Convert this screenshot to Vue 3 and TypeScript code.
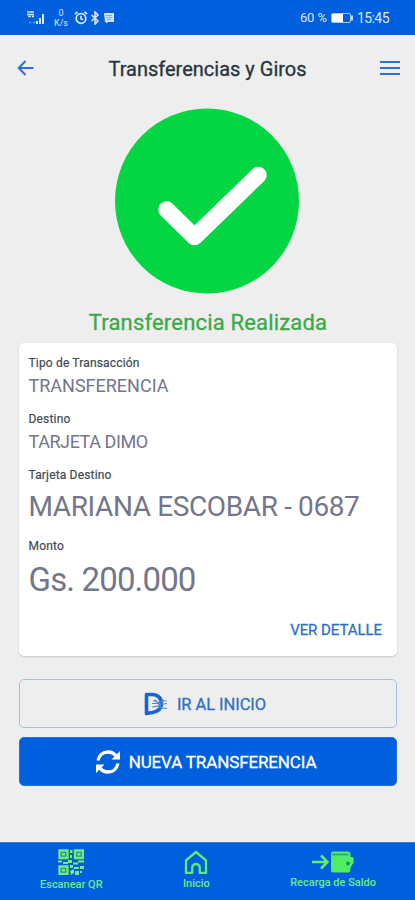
<script setup lang="ts">
interface Detail {
  label: string
  value: string
  kind: string
}

const details: Detail[] = [
  { label: 'Tipo de Transacción', value: 'TRANSFERENCIA', kind: 'type' },
  { label: 'Destino', value: 'TARJETA DIMO', kind: 'target' },
  { label: 'Tarjeta Destino', value: 'MARIANA ESCOBAR - 0687', kind: 'holder' },
  { label: 'Monto', value: 'Gs. 200.000', kind: 'amount' },
]
</script>

<template>
  <div class="screen">
    <div class="status">
      <svg class="signal" viewBox="0 0 20 16" width="20" height="16">
        <path d="M1 2h7M1 4.500h7M2 6.500h3M6 6.500h2" stroke="#cfe2ff" stroke-width="1.700" />
        <path d="M3 12.500h2M7 12.500h2" stroke="#6fa8f5" stroke-width="1.500" />
        <path d="M10 14v-3h2v3zM13 14V8h2v6zM16 14V4h2v10z" fill="#d9e9ff" />
      </svg>
      <div class="speed"><span>0</span><span>K/s</span></div>
      <svg class="alarm" viewBox="0 0 14 14" width="14" height="14" fill="none" stroke="#d6e6ff" stroke-width="1.700">
        <circle cx="7" cy="7.500" r="4.800" />
        <path d="M7 4.800v3l2 1M1 3l2.500-2M13 3l-2.500-2" />
      </svg>
      <svg class="bt" viewBox="0 0 10 14" width="10" height="14" fill="none" stroke="#d6e6ff" stroke-width="1.600">
        <path d="M1.500 4l6.500 6-3 3V1l3 3-6.500 6" />
      </svg>
      <svg class="msg" viewBox="0 0 12 12" width="12" height="12">
        <path d="M1 1h10v9H5l-2 1.500V10H2z" fill="#cfe2ff" />
        <path d="M3 3.500h6M4 5.500h5M4 7.500h4" stroke="#5e9bf0" stroke-width=".8" />
      </svg>
      <span class="percent">60 %</span>
      <svg class="battery" viewBox="0 0 24 12" width="24" height="12">
        <rect x="1.500" y="1.500" width="19" height="9" rx="1.500" fill="none" stroke="#a9cbfb" />
        <rect x="2" y="2" width="11" height="8" fill="#fff" />
        <path d="M22 3.500v5" stroke="#cfe2ff" stroke-width="1.800" />
      </svg>
      <span class="clock">15:45</span>
    </div>

    <header class="header">
      <svg class="back" viewBox="0 0 18 18" width="18" height="18" fill="none" stroke="#2b72d0" stroke-width="2">
        <path d="M16.500 9H2M8.500 2L1.700 9l6.800 7" />
      </svg>
      <h1><span>Transferencias y Giros</span></h1>
      <svg class="menu" viewBox="0 0 20 16" width="20" height="16" fill="none" stroke="#2b72d0" stroke-width="2">
        <path d="M0 2h20M0 8h20M0 14h20" />
      </svg>
    </header>

    <main>
      <svg class="done" viewBox="0 0 184 186" width="184" height="186">
        <ellipse cx="92" cy="93" rx="92" ry="92.500" fill="#04d643" />
        <path d="M51.500 101.500L79.500 129L143.500 67" fill="none" stroke="#fff" stroke-width="16.500" stroke-linecap="round" stroke-linejoin="round" />
      </svg>
      <h2><span>Transferencia Realizada</span></h2>

      <section class="card">
        <div v-for="item in details" :key="item.label" class="detail" :class="item.kind">
          <span class="label">{{ item.label }}</span>
          <span class="value">{{ item.value }}</span>
        </div>
        <a class="more">VER DETALLE</a>
      </section>

      <button class="btn outline">
        <svg viewBox="0 0 24 24" width="24" height="24" fill="none">
          <path d="M2.500 2.500h5.500c6 0 9.500 4 9.500 9s-4 8-9 9l-6 1z" stroke="#1766d8" stroke-width="3.600" stroke-linejoin="round" />
          <path d="M9 8.500l6 2 3-2 5 .5M8 11.500h6l3 1 6-1M8 15l6-1 3 2 6 .5M11 7.500l7 9M20 8l-6 9" stroke="#4a86dc" stroke-width="1.200" />
        </svg>
        <span>IR AL INICIO</span>
      </button>
      <button class="btn solid">
        <svg viewBox="0 0 24 24" width="24" height="24" fill="none" stroke="#fff" stroke-width="3.300">
          <path d="M2 10.500C3 5.500 7 2 12 2c3.500 0 6.500 1.700 8.300 4.500M22 13.500c-1 5-5 8.500-10 8.500-3.500 0-6.500-1.700-8.300-4.500" />
          <path d="M24 1v8.500h-8.500zM0 23v-8.500h8.500z" fill="#fff" stroke="none" />
        </svg>
        <span>NUEVA TRANSFERENCIA</span>
      </button>
    </main>

    <nav class="nav">
      <a class="tab qr">
        <svg viewBox="0 0 26 26" width="26" height="26">
          <path d="M1.500 1.500h8v7.500h-8zM17 1.500h8v7.500h-8zM1.500 17.500h8v7.500h-8z" fill="#348c98" stroke="#6af078" stroke-width="2.300" />
          <path d="M4 4h3v2.500H4zM19.500 4h3v2.500h-3zM4 20h3v2.500H4zM12 1h2.500v3H12zM12 6h2v3h-2zM0 11.500h4v2H0zM5 13h5v2H5zM10 11h4v3h-4zM15 13.500h5v2h-5zM20 11.500h6v2h-6zM12 16h3v3h-3zM16 18h5v2h-5zM22 17h4v3h-4zM12 22l4-2v4l-3 2zM17 22h4v4h-4zM22 22h2v2h-2z" fill="#7bea7c" />
        </svg>
        <span>Escanear QR</span>
      </a>
      <a class="tab home">
        <svg viewBox="0 0 24 24" width="24" height="24" fill="none" stroke="#5ef06c" stroke-width="2.300" stroke-linejoin="round">
          <path d="M2 10.300L12 2l10 8.300V23h-6.200v-5.200a3.800 3.800 0 0 0-7.600 0V23H2z" />
        </svg>
        <span>Inicio</span>
      </a>
      <a class="tab top-up">
        <svg viewBox="0 0 44 22" width="44" height="22" fill="none">
          <path d="M1 11h15M10 4.500l6.500 6.500-6.500 6.500" stroke="#5ef06c" stroke-width="2.500" />
          <path d="M22 .5h14.500a3 3 0 0 1 3 3V6h1.200a2 2 0 0 1 2 2v3.500l-2 3-1.500 3.500v1.500a2 2 0 0 1-2 2H22a2 2 0 0 1-2-2v-17a2 2 0 0 1 2-2z" fill="#52ec62" />
          <path d="M22 3.500h14.500" stroke="#279c82" stroke-width="1.700" stroke-linecap="round" />
          <circle cx="37" cy="12.500" r="1.900" fill="#168b7d" />
        </svg>
        <span>Recarga de Saldo</span>
      </a>
    </nav>
  </div>
</template>

<style>
body {
  margin: 0;
  background: #eeeeee;
}
</style>

<style scoped>
.screen {
  box-sizing: border-box;
  width: 415px;
  height: 900px;
  display: flex;
  flex-direction: column;
  overflow: hidden;
  background: #eeeeee;
  font-family: Roboto, "Liberation Sans", sans-serif;
  color: #27353e;
}
.screen span, .more { white-space: nowrap; }
svg { display: block; flex: none; }

.status {
  box-sizing: border-box;
  height: 35px;
  flex: none;
  display: flex;
  align-items: center;
  padding: 0 26px;
  background: #005fdc;
  color: #d9e8ff;
}
.speed {
  width: 16px;
  margin-left: 7px;
  display: flex;
  flex-direction: column;
  align-items: center;
  font-size: 9px;
  line-height: 10px;
  margin-top: 1px;
}
.alarm { margin-left: 5px; }
.bt { margin-left: 2px; }
.msg { margin-left: 3px; }
.percent { margin-left: auto; font-size: 13px; letter-spacing: -0.1px; }
.battery { margin-left: 3px; }
.clock { margin-left: 3px; font-size: 14px; letter-spacing: -0.55px; }

.header {
  box-sizing: border-box;
  height: 64px;
  flex: none;
  display: flex;
  align-items: center;
  justify-content: space-between;
  padding: 0 15px 0 17px;
  border-top: 2px solid #f5f6f7;
}
h1, h2 { margin: 0; font-weight: 400; text-align: center; }
h1 {
  font-size: 20px;
  line-height: 24px;
  margin-top: 1px;
  -webkit-text-stroke: 0.3px currentColor;
}

main {
  flex: 1;
  display: flex;
  flex-direction: column;
  align-items: center;
  padding: 9px 18px 0 19px;
}
.done { margin-right: 2px; }
h2 {
  font-size: 22px;
  line-height: 28px;
  margin-top: 15px;
  color: #38ab48;
  letter-spacing: 0.18px;
  -webkit-text-stroke: 0.3px currentColor;
}
.card {
  box-sizing: border-box;
  width: 100%;
  height: 313px;
  margin-top: 6px;
  padding: 12px 15px 0 9.500px;
  display: flex;
  flex-direction: column;
  border-radius: 5px;
  background: #fff;
  box-shadow: 0 1px 2px rgba(0, 0, 0, 0.16);
}
.detail {
  display: flex;
  flex-direction: column;
  align-items: flex-start;
  color: #74768a;
}
.label {
  font-size: 12px;
  line-height: 16px;
  font-weight: 400;
  letter-spacing: 0.17px;
  color: #414a54;
  -webkit-text-stroke: 0.2px currentColor;
}
.type, .target { height: 56px; }
.holder { height: 71px; }
.amount { height: 75px; }
.type .value, .target .value { font-size: 18px; line-height: 22px; margin-top: 4px; }
.target .value { letter-spacing: -0.42px; }
.holder .value {
  font-size: 28px;
  line-height: 34px;
  margin-top: 7px;
  letter-spacing: -0.38px;
}
.amount .value {
  font-size: 33px;
  line-height: 38px;
  margin-top: 7px;
  letter-spacing: -0.85px;
}
.more {
  align-self: flex-end;
  margin-top: 7px;
  font-size: 15px;
  line-height: 20px;
  font-weight: 400;
  letter-spacing: -0.05px;
  color: #2d70c7;
  -webkit-text-stroke: 0.3px currentColor;
}

.btn {
  box-sizing: border-box;
  width: 100%;
  height: 49px;
  display: flex;
  align-items: center;
  justify-content: center;
  padding: 0;
  border-radius: 5px;
  font-family: inherit;
  font-weight: 400;
  -webkit-text-stroke: 0.3px currentColor;
}
.outline {
  margin-top: 23px;
  padding-right: 6px;
  border: 1px solid #a6c1e8;
  background: #eeeeee;
  color: #2f71c6;
  font-size: 16.500px;
  letter-spacing: -0.05px;
  gap: 9px;
}
.outline span { margin-top: 2px; }
.solid {
  margin-top: 9px;
  padding-right: 4px;
  border: 1px solid #2873dd;
  background: #005fdc;
  color: #fff;
  font-size: 17px;
  letter-spacing: -0.13px;
  gap: 9px;
}
.solid span { margin-top: 1px; }

.nav {
  box-sizing: border-box;
  height: 58px;
  flex: none;
  display: flex;
  justify-content: space-between;
  padding: 0 39px 0 40px;
  background: #005fdc;
  border-top: 1px solid #3c83e0;
}
.tab {
  display: flex;
  flex-direction: column;
  align-items: center;
  color: #6cea91;
  font-size: 11px;
  line-height: 14px;
  font-weight: 500;
}
.qr { padding-top: 6px; }
.qr span { margin-top: 3px; }
.home { padding-top: 7px; }
.home span { margin-top: 3px; }
.top-up { padding-top: 8px; }
.top-up span { margin-top: 3px; }
</style>
